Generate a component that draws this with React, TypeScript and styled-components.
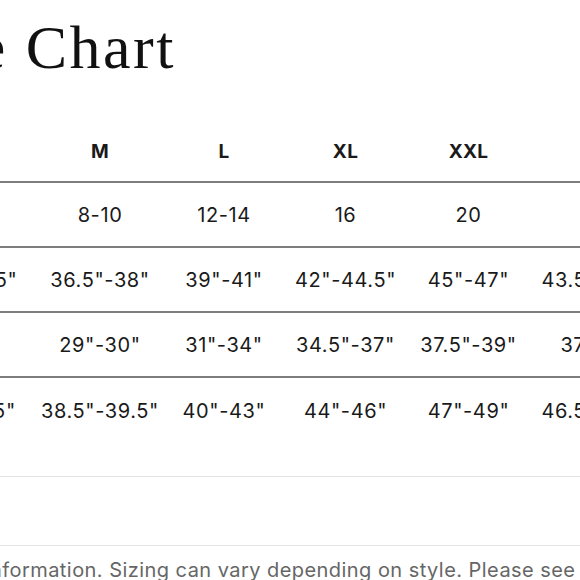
import React from "react";
import styled, { createGlobalStyle } from "styled-components";

const GlobalStyle = createGlobalStyle`
  html, body {
    margin: 0;
    padding: 0;
    background: #ffffff;
    overflow: hidden;
  }
`;

const COLUMNS = "130px 157px 126px 122px 121px 125px 140px";

const sizes = ["S", "M", "L", "XL", "XXL", "1X"];

const rows = [
  { label: "US Size", values: ["4-6", "8-10", "12-14", "16", "20", "22"] },
  {
    label: "Bust",
    values: [`33.5"-35.5"`, `36.5"-38"`, `39"-41"`, `42"-44.5"`, `45"-47"`, `43.5"-45.5"`],
  },
  {
    label: "Waist",
    values: [`26"-28"`, `29"-30"`, `31"-34"`, `34.5"-37"`, `37.5"-39"`, `37"-40"`],
  },
  {
    label: "Hips",
    values: [`35.5"-37.5"`, `38.5"-39.5"`, `40"-43"`, `44"-46"`, `47"-49"`, `46.5"-48.5"`],
  },
];

function App() {
  return (
    <>
      <GlobalStyle />
      <Page>
        <Title>Size Chart</Title>
        <Table>
          <Row $header>
            <Cell />
            {sizes.map((s) => (
              <Cell key={s}>{s}</Cell>
            ))}
          </Row>
          {rows.map((r, i) => (
            <Row key={r.label} $last={i === rows.length - 1}>
              <Cell>{r.label}</Cell>
              {r.values.map((v, j) => (
                <Cell key={j}>{v}</Cell>
              ))}
            </Row>
          ))}
        </Table>
        <Divider />
        <Divider $short />
        <Note>
          This chart is a guide for general sizing information. Sizing can vary
          depending on style. Please see each product page for fit details.
        </Note>
      </Page>
    </>
  );
}

export default App;

const Page = styled.div`
  margin-left: -250px;
  width: 1000px;
  padding-top: 10px;
`;

const Title = styled.h1`
  margin: 0 0 34px 141px;
  font-family: "Liberation Serif", "Times New Roman", serif;
  font-size: 62px;
  font-weight: 400;
  line-height: 74px;
  letter-spacing: 2.5px;
  color: #111111;
`;

const Table = styled.div`
  display: flex;
  flex-direction: column;
  width: 921px;
  margin-top: 1px;
  font-family: Inter, "Noto Sans", sans-serif;
  color: #1a1a1a;
`;

const Row = styled.div<{ $header?: boolean; $last?: boolean }>`
  display: grid;
  grid-template-columns: ${COLUMNS};
  align-items: center;
  box-sizing: border-box;
  height: 65px;
  padding-top: ${(p) => (p.$header ? "3px" : "1px")};
  font-size: ${(p) => (p.$header ? "19px" : "20px")};
  font-weight: ${(p) => (p.$header ? 700 : 400)};
  letter-spacing: ${(p) => (p.$header ? "0.3px" : "0.6px")};
  border-bottom: ${(p) => (p.$last ? "none" : "2px solid #7d7d7d")};
`;

const Cell = styled.div`
  text-align: center;
  white-space: nowrap;
`;

const Divider = styled.div<{ $short?: boolean }>`
  border-top: 1px solid #e3e3e3;
  margin-top: ${(p) => (p.$short ? "0" : "33px")};
  height: ${(p) => (p.$short ? "10px" : "68px")};
`;

const Note = styled.p`
  margin: 0 0 0 -150px;
  white-space: nowrap;
  font-family: Inter, "Noto Sans", sans-serif;
  font-size: 20px;
  line-height: 28px;
  letter-spacing: 0.45px;
  color: #666666;
`;
